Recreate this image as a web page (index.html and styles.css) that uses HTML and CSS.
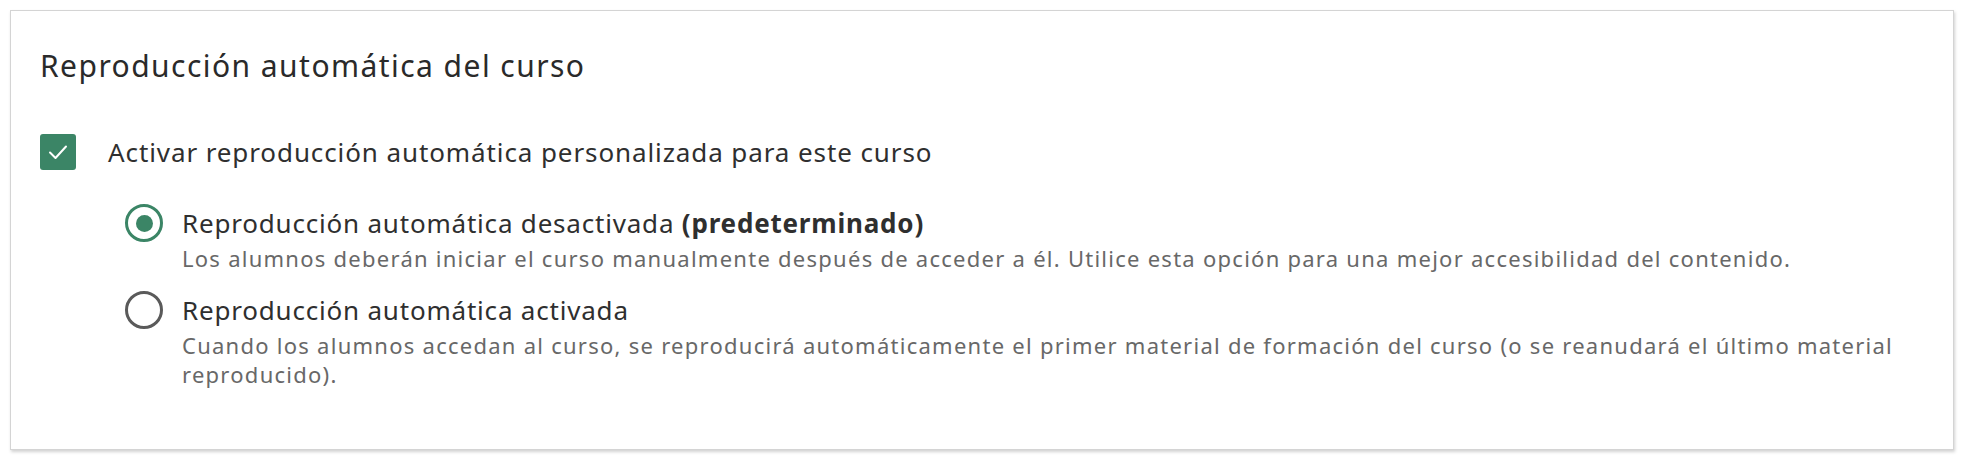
FILE: index.html
```html
<!DOCTYPE html>
<html lang="es">
<head>
<meta charset="utf-8">
<title>Reproducción automática del curso</title>
<link rel="stylesheet" href="styles.css">
</head>
<body>
<section class="card">
  <h2 class="title">Reproducción automática del curso</h2>
  <label class="check-row">
    <span class="checkbox">
      <svg viewBox="0 0 36 36" width="36" height="36" aria-hidden="true"><path d="M10 18.5 L15.5 24 L26 12.5" fill="none" stroke="#fff" stroke-width="2" stroke-linecap="round" stroke-linejoin="round"/></svg>
    </span>
    <span class="check-label">Activar reproducción automática personalizada para este curso</span>
  </label>
  <div class="options">
    <div class="option">
      <span class="radio radio-on"><span class="dot"></span></span>
      <div class="option-text">
        <div class="option-label">Reproducción automática desactivada <b>(predeterminado)</b></div>
        <div class="option-desc">Los alumnos deberán iniciar el curso manualmente después de acceder a él. Utilice esta opción para una mejor accesibilidad del contenido.</div>
      </div>
    </div>
    <div class="option">
      <span class="radio"></span>
      <div class="option-text">
        <div class="option-label">Reproducción automática activada</div>
        <div class="option-desc">Cuando los alumnos accedan al curso, se reproducirá automáticamente el primer material de formación del curso (o se reanudará el último material reproducido).</div>
      </div>
    </div>
  </div>
</section>
</body>
</html>
```

FILE: styles.css
```css
html, body {
  margin: 0;
  background: #ffffff;
}
body {
  padding: 10px;
  font-family: "Noto Sans", "Open Sans", sans-serif;
  color: #2f2f2f;
}
.card {
  border: 1px solid #d4d4d4;
  box-shadow: 1px 2px 3px rgba(0, 0, 0, 0.18);
  padding: 35px 30px 60px 29px;
  background: #fff;
}
.title {
  margin: 0;
  font-size: 30px;
  line-height: 40px;
  font-weight: 400;
  letter-spacing: 1.45px;
  color: #2a2a2a;
}
.check-row {
  display: flex;
  align-items: center;
  margin-top: 48px;
  height: 36px;
}
.checkbox {
  width: 36px;
  height: 36px;
  border-radius: 3px;
  background: #3b8566;
  display: flex;
  flex: none;
}
.check-label {
  margin-left: 32px;
  font-size: 26px;
  line-height: 36px;
  letter-spacing: 0.9px;
}
.options {
  margin-top: 34px;
  padding-left: 85px;
  display: flex;
  flex-direction: column;
  gap: 18px;
}
.option {
  display: flex;
  align-items: flex-start;
}
.radio {
  width: 38px;
  height: 38px;
  box-sizing: border-box;
  border-radius: 50%;
  border: 3.5px solid #5a5a5a;
  flex: none;
  margin-right: 19px;
  display: flex;
  align-items: center;
  justify-content: center;
}
.radio-on {
  border-color: #3b8566;
}
.dot {
  width: 17px;
  height: 17px;
  border-radius: 50%;
  background: #3b8566;
}
.option-label {
  font-size: 26px;
  line-height: 38px;
  letter-spacing: 0.8px;
}
.option-label b {
  font-weight: 700;
}
.option-desc {
  margin-top: 2px;
  font-size: 22px;
  line-height: 29px;
  letter-spacing: 1.26px;
  color: #686868;
}
```
